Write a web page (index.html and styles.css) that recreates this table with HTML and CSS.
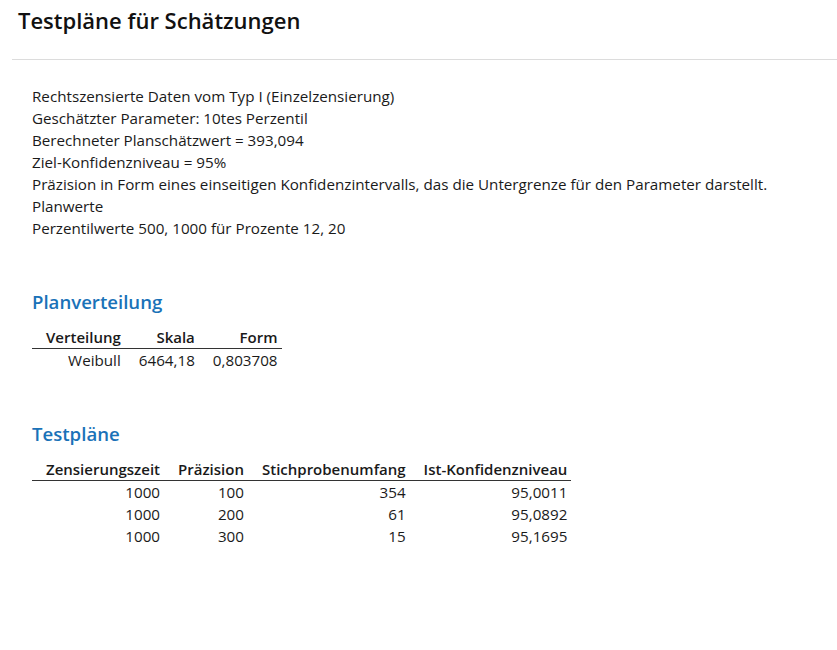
FILE: index.html
```html
<!DOCTYPE html>
<html lang="de">
<head>
<meta charset="utf-8">
<title>Testpläne für Schätzungen</title>
<link rel="stylesheet" href="styles.css">
</head>
<body>
<header class="page-header">
  <h1 class="page-title">Testpläne für Schätzungen</h1>
</header>
<main class="content">
  <div class="info">
    <div>Rechtszensierte Daten vom Typ I (Einzelzensierung)</div>
    <div>Geschätzter Parameter: 10tes Perzentil</div>
    <div>Berechneter Planschätzwert = 393,094</div>
    <div>Ziel-Konfidenzniveau = 95%</div>
    <div>Präzision in Form eines einseitigen Konfidenzintervalls, das die Untergrenze für den Parameter darstellt.</div>
    <div>Planwerte</div>
    <div>Perzentilwerte 500, 1000 für Prozente 12, 20</div>
  </div>

  <section class="section">
    <h2 class="section-title">Planverteilung</h2>
    <table class="data">
      <thead>
        <tr><th>Verteilung</th><th>Skala</th><th>Form</th></tr>
      </thead>
      <tbody>
        <tr><td>Weibull</td><td>6464,18</td><td>0,803708</td></tr>
      </tbody>
    </table>
  </section>

  <section class="section">
    <h2 class="section-title">Testpläne</h2>
    <table class="data">
      <thead>
        <tr><th>Zensierungszeit</th><th>Präzision</th><th>Stichprobenumfang</th><th>Ist-Konfidenzniveau</th></tr>
      </thead>
      <tbody>
        <tr><td>1000</td><td>100</td><td>354</td><td>95,0011</td></tr>
        <tr><td>1000</td><td>200</td><td>61</td><td>95,0892</td></tr>
        <tr><td>1000</td><td>300</td><td>15</td><td>95,1695</td></tr>
      </tbody>
    </table>
  </section>
</main>
</body>
</html>
```

FILE: styles.css
```css
html, body {
  margin: 0;
  padding: 0;
  background: #ffffff;
}
body {
  font-family: "Open Sans", "Noto Sans", sans-serif;
  color: #1a1a1a;
  font-size: 15.2px;
}
.page-header {
  margin-left: 12px;
  padding: 5px 0 0 6px;
  border-bottom: 1px solid #dcdcdc;
  box-sizing: border-box;
  height: 60px;
}
.page-title {
  margin: 0;
  font-size: 22px;
  font-weight: 600;
  line-height: 30px;
  color: #111;
}
.content {
  padding: 25px 32px;
}
.info {
  line-height: 22px;
}
.section {
  margin-top: 50px;
}
.section-title {
  margin: 0 0 12px 0;
  font-size: 18.6px;
  font-weight: 600;
  color: #1a72b8;
  line-height: 26px;
}
.data {
  border-collapse: collapse;
}
.data th {
  font-size: 15px;
  font-weight: 600;
  text-align: right;
  padding: 0 1px 0 17px;
  line-height: 21px;
  border-bottom: 1px solid #333;
}
.data td {
  text-align: right;
  padding: 0 1px 0 17px;
  line-height: 22px;
}
.data th:first-child,
.data td:first-child {
  padding-left: 14px;
}
.data th:last-child,
.data td:last-child {
  padding-right: 4px;
}
```
